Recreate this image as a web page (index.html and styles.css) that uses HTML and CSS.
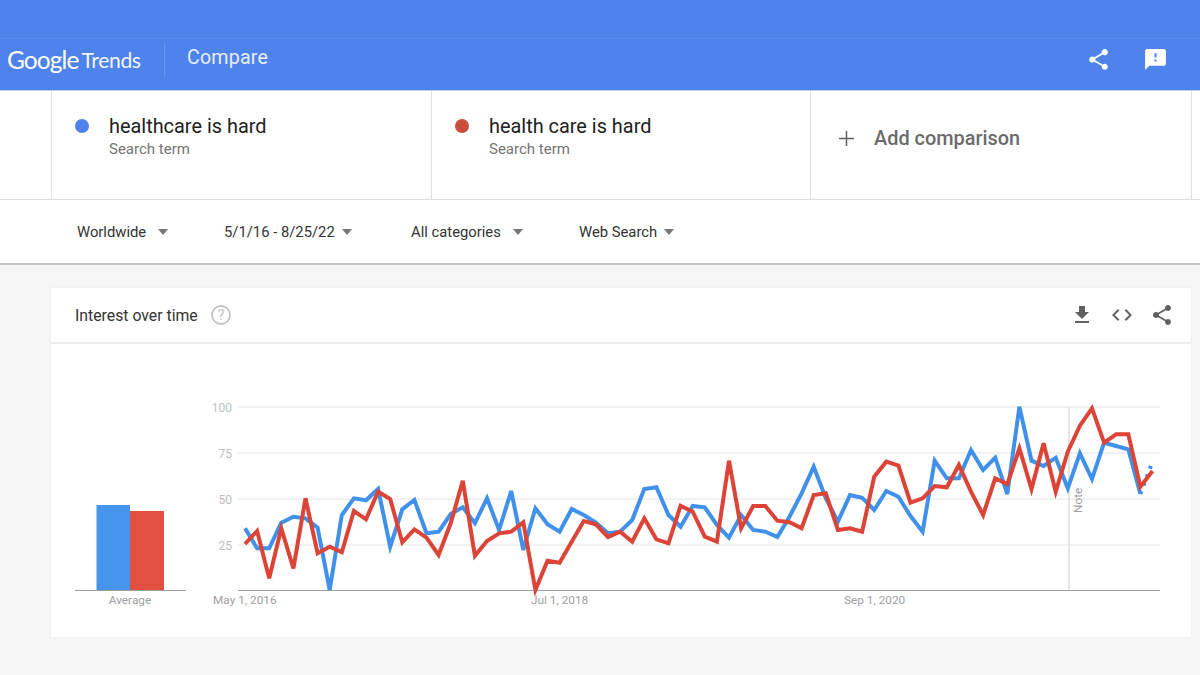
FILE: index.html
```html
<!DOCTYPE html>
<html lang="en">

<head>
    <meta charset="UTF-8">
    <title>Compare - Google Trends</title>
    <link rel="stylesheet" href="styles.css">
</head>

<body>
    <header class="topbar">
        <div class="topbar-strip"></div>
        <div class="topbar-main">
            <div class="logo"><span class="logo-google">Google</span><span class="logo-trends">Trends</span></div>
            <div class="page-title">Compare</div>
            <div class="topbar-icons">
                <svg class="icon-share" viewBox="0 0 24 24"><path d="M18 16.08c-.76 0-1.44.3-1.96.77L8.91 12.7c.05-.23.09-.46.09-.7s-.04-.47-.09-.7l7.05-4.11c.54.5 1.25.81 2.04.81 1.66 0 3-1.34 3-3s-1.34-3-3-3-3 1.34-3 3c0 .24.04.47.09.7L8.04 9.81C7.5 9.31 6.79 9 6 9c-1.66 0-3 1.34-3 3s1.34 3 3 3c.79 0 1.5-.31 2.04-.81l7.12 4.16c-.05.21-.08.43-.08.65 0 1.61 1.31 2.92 2.92 2.92 1.61 0 2.92-1.31 2.92-2.92s-1.31-2.92-2.92-2.92z"/></svg>
                <svg class="icon-feedback" viewBox="0 0 24 24"><path d="M20 2H4c-1.1 0-1.99.9-1.99 2L2 22l4-4h14c1.1 0 2-.9 2-2V4c0-1.1-.9-2-2-2zm-7 12h-2v-2h2v2zm0-4h-2V6h2v4z"/></svg>
            </div>
        </div>
    </header>

    <!-- Search terms -->
    <section class="terms">
        <div class="term">
            <span class="dot dot-blue"></span>
            <div>
                <div class="term-name">healthcare is hard</div>
                <div class="term-sub">Search term</div>
            </div>
        </div>
        <div class="term">
            <span class="dot dot-red"></span>
            <div>
                <div class="term-name">health care is hard</div>
                <div class="term-sub">Search term</div>
            </div>
        </div>
        <div class="term term-add">
            <svg class="icon-plus" viewBox="0 0 16 16"><path d="M7.2 0h1.6v7.2H16v1.6H8.8V16H7.2V8.8H0V7.2h7.2z"/></svg>
            <span>Add comparison</span>
        </div>
    </section>

    <!-- Filters -->
    <section class="filters">
        <div class="filter filter-geo">Worldwide<span class="caret"></span></div>
        <div class="filter filter-date">5/1/16 - 8/25/22<span class="caret"></span></div>
        <div class="filter filter-cat">All categories<span class="caret"></span></div>
        <div class="filter filter-type">Web Search<span class="caret"></span></div>
    </section>

    <main class="content">
        <div class="card">
            <div class="card-header">
                <span class="card-title">Interest over time</span>
                <svg class="icon-help" viewBox="0 0 20 20">
                    <circle cx="10" cy="10" r="9"/>
                    <text x="10" y="15.2">?</text>
                </svg>
                <div class="card-icons">
                    <svg viewBox="0 0 24 24"><path d="M19 9h-4V3H9v6H5l7 7 7-7zM5 18v2h14v-2H5z"/></svg>
                    <svg viewBox="0 0 24 24"><path d="M9.4 16.6L4.8 12l4.6-4.6L8 6l-6 6 6 6 1.4-1.4zm5.2 0l4.6-4.6-4.6-4.6L16 6l6 6-6 6-1.4-1.4z"/></svg>
                    <svg viewBox="0 0 24 24"><path d="M18 16.08c-.76 0-1.44.3-1.96.77L8.91 12.7c.05-.23.09-.46.09-.7s-.04-.47-.09-.7l7.05-4.11c.54.5 1.25.81 2.04.81 1.66 0 3-1.34 3-3s-1.34-3-3-3-3 1.34-3 3c0 .24.04.47.09.7L8.04 9.81C7.5 9.31 6.79 9 6 9c-1.66 0-3 1.34-3 3s1.34 3 3 3c.79 0 1.5-.31 2.04-.81l7.12 4.16c-.05.21-.08.43-.08.65 0 1.61 1.31 2.92 2.92 2.92 1.61 0 2.92-1.31 2.92-2.92s-1.31-2.92-2.92-2.92z"/></svg>
                </div>
            </div>
            <div class="card-body">
                <!-- Average bars -->
                <svg class="avg-chart" viewBox="51 344 149 293">
                    <rect class="bar-blue" x="96.5" y="505" width="33.5" height="85"/>
                    <rect class="bar-red" x="130" y="511" width="34" height="79"/>
                    <line class="axis" x1="75" y1="590.5" x2="186" y2="590.5"/>
                    <text class="x-label" x="130" y="604" text-anchor="middle">Average</text>
                </svg>

                <!-- Line chart, drawn in page coordinates -->
                <svg class="line-chart" viewBox="200 344 991 293">
                    <line class="grid" x1="238" y1="407" x2="1160" y2="407"/>
                    <line class="grid" x1="238" y1="453" x2="1160" y2="453"/>
                    <line class="grid" x1="238" y1="499" x2="1160" y2="499"/>
                    <line class="grid" x1="238" y1="545" x2="1160" y2="545"/>
                    <line class="axis" x1="238" y1="590.5" x2="1160" y2="590.5"/>
                    <line class="note-line" x1="1069" y1="407" x2="1069" y2="590"/>

                    <text class="y-label" x="232" y="411.5">100</text>
                    <text class="y-label" x="232" y="457.5">75</text>
                    <text class="y-label" x="232" y="503.5">50</text>
                    <text class="y-label" x="232" y="549.5">25</text>
                    <text class="x-label" x="213" y="604">May 1, 2016</text>
                    <text class="x-label" x="531" y="604">Jul 1, 2018</text>
                    <text class="x-label" x="844" y="604">Sep 1, 2020</text>
                    <text class="x-label" transform="translate(1082 513) rotate(-90)">Note</text>

                    <polyline class="series series-blue" points="245,528.3 257.1,548.3 269.2,548.3 281.3,522.7 293.4,516.7 305.5,518.3 317.6,527.7 329.7,590 341.8,515 353.9,498.3 366,500.3 378.1,489 390.2,546.7 402.3,509.3 414.4,500 426.5,533.3 438.6,531.7 450.7,514 462.8,507.3 474.9,523.3 487,498.3 499.1,530 511.2,491 523.3,550 535.4,508.3 547.5,524.3 559.6,531.7 571.7,509 583.8,515 595.9,522.7 608,533.3 620.1,531.7 632.2,520 644.3,489 656.4,487.3 668.5,515 680.6,526.7 692.7,506 704.8,507.3 716.9,525 729,537.7 741.1,515 753.2,530 765.3,531.7 777.4,537 789.5,516.7 801.6,493.3 813.7,466.7 825.8,498.3 837.9,521.7 850,495 862.1,497.7 874.2,510 886.3,491 898.4,496.7 910.5,516 922.6,531.7 934.7,460.7 946.8,478.3 958.9,478.3 971,450 983.1,470 995.2,457.7 1007.3,494 1019.4,406.7 1031.5,460.7 1043.6,466 1055.7,457.7 1067.8,488.3 1079.9,453.3 1092,479 1104.1,442.7 1116.2,446 1128.3,449.3 1140.4,494"/>
                    <polyline class="series series-blue series-partial" points="1140.4,494 1152.5,461.7"/>
                    <polyline class="series series-red" points="245,544 257.1,531 269.2,578.3 281.3,528.3 293.4,568.3 305.5,498.3 317.6,553.3 329.7,546.7 341.8,552.3 353.9,511 366,519.3 378.1,491.7 390.2,499 402.3,542.3 414.4,529.3 426.5,537.7 438.6,555 450.7,523.3 462.8,480.7 474.9,555.7 487,541 499.1,533.3 511.2,531.7 523.3,522.3 535.4,590 547.5,560.7 559.6,562.7 571.7,541.7 583.8,521 595.9,524.3 608,537 620.1,531.7 632.2,541.7 644.3,518.3 656.4,539.3 668.5,543.3 680.6,505.7 692.7,511.7 704.8,536.7 716.9,541.7 729,460.7 741.1,528.3 753.2,506 765.3,506 777.4,520.7 789.5,522.3 801.6,528.3 813.7,495 825.8,493.3 837.9,530 850,528.3 862.1,531.7 874.2,476.7 886.3,461.7 898.4,465.7 910.5,502.7 922.6,498.3 934.7,486 946.8,487.3 958.9,465 971,491.7 983.1,515 995.2,478.3 1007.3,484.3 1019.4,448.3 1031.5,489 1043.6,443.3 1055.7,491.7 1067.8,451.7 1079.9,425.7 1092,408.3 1104.1,442.7 1116.2,434.3 1128.3,434.3 1140.4,486.7 1152.5,471"/>
                </svg>
            </div>
        </div>
    </main>
</body>

</html>
```

FILE: styles.css
```css
/* Global styles */
* {
    padding: 0;
    margin: 0;
    box-sizing: border-box;
}

body {
    font-family: Roboto, "Liberation Sans", sans-serif;
    background-color: #f6f6f6;
    width: 1200px;
    height: 675px;
    overflow: hidden;
}

svg {
    display: block;
}

/* Top bar */
.topbar {
    background-color: #4f83ec;
    height: 91px;
    color: #fff;
    border-bottom: 1px solid #c3cfe6;
}

.topbar-strip {
    height: 38px;
}

.topbar-main {
    height: 52px;
    border-top: 1px solid #5a8bed;
    display: flex;
    align-items: center;
    padding-left: 7px;
    padding-bottom: 10px;
}

.logo {
    width: 158px;
    height: 34px;
    border-right: 1px solid #6c97ef;
    display: flex;
    align-items: center;
}

.logo-google {
    font-family: Lato, sans-serif;
    font-size: 24.5px;
    letter-spacing: -0.9px;
    margin-right: 3px;
}

.logo-trends {
    font-family: Lato, sans-serif;
    font-size: 21.2px;
    letter-spacing: -0.4px;
    opacity: 0.92;
}

.page-title {
    font-size: 19.6px;
    margin-left: 22px;
    color: #e8effd;
    letter-spacing: 0.2px;
    margin-top: -5px;
}

.topbar-icons {
    margin-left: auto;
    display: flex;
    align-items: center;
    gap: 32px;
    padding-right: 32px;
    fill: #fff;
}

.icon-share {
    width: 25px;
    height: 25px;
}

.icon-feedback {
    width: 25px;
    height: 25px;
}

/* Search terms */
.terms {
    background-color: #fff;
    height: 109px;
    padding-left: 51px;
    padding-right: 8px;
    display: grid;
    grid-template-columns: 380px 379px 382px;
    border-bottom: 1px solid #e0e0e0;
}

.term {
    border-left: 1px solid #e0e0e0;
    padding: 23px 0 0 23px;
    display: flex;
    align-items: flex-start;
    gap: 20px;
}

.term:last-child {
    border-right: 1px solid #e0e0e0;
}

.dot {
    width: 14px;
    height: 14px;
    border-radius: 50%;
    margin-top: 5px;
}

.dot-blue {
    background-color: #4f83ec;
}

.dot-red {
    background-color: #cb4b3d;
}

.term-name {
    font-size: 19.9px;
    line-height: 26px;
    color: #212121;
}

.term-sub {
    font-size: 15px;
    line-height: 18px;
    color: #757575;
}

.term-add {
    padding: 0 0 13px 28px;
    align-items: center;
    font-size: 19.9px;
    font-weight: 500;
    color: #6b6b6b;
}

.icon-plus {
    width: 15px;
    height: 15px;
    fill: #616161;
}

/* Filters */
.filters {
    background-color: #fff;
    height: 65px;
    padding-left: 77px;
    display: flex;
    align-items: center;
    border-bottom: 2px solid #c6c6c6;
    font-size: 14.8px;
    color: #333;
}

.filter {
    display: flex;
    align-items: center;
}

.filter-geo {
    width: 147px;
}

.filter-date {
    width: 187px;
}

.filter-cat {
    width: 168px;
}

.caret {
    width: 0;
    height: 0;
    margin-left: 12px;
    border-left: 5.5px solid transparent;
    border-right: 5.5px solid transparent;
    border-top: 6px solid #757575;
}

.filter-date .caret,
.filter-type .caret {
    margin-left: 7px;
}

/* Card */
.content {
    padding: 23px 9px 0 51px;
}

.card {
    background-color: #fff;
    height: 349px;
    box-shadow: 0 0 2px rgba(0, 0, 0, 0.06);
}

.card-header {
    height: 56px;
    border-bottom: 2px solid #ececec;
    display: flex;
    align-items: center;
    padding-left: 24px;
}

.card-title {
    font-size: 15.8px;
    color: #333;
}

.icon-help {
    width: 20px;
    height: 20px;
    margin-left: 13px;
}

.icon-help circle {
    fill: none;
    stroke: #c4c4c4;
    stroke-width: 1.8;
}

.icon-help text {
    font-size: 15px;
    fill: #c4c4c4;
    text-anchor: middle;
}

.card-icons {
    margin-left: auto;
    display: flex;
    gap: 16px;
    padding-right: 17px;
    fill: #616161;
}

.card-icons svg {
    width: 24px;
    height: 24px;
}

.card-body {
    display: flex;
    height: 293px;
}

.avg-chart {
    width: 149px;
    height: 293px;
}

.line-chart {
    width: 991px;
    height: 293px;
}

.bar-blue {
    fill: #4695ec;
}

.bar-red {
    fill: #e2503f;
}

.axis {
    stroke: #a0a0a0;
    stroke-width: 1;
}

.grid {
    stroke: #e4e4e4;
    stroke-width: 1;
}

.note-line {
    stroke: #dcdcdc;
    stroke-width: 1.5;
}

.x-label {
    font-size: 11.8px;
    fill: #9e9e9e;
}

.y-label {
    font-size: 12px;
    fill: #bdbdbd;
    text-anchor: end;
}

.series {
    fill: none;
    stroke-width: 4;
    stroke-linejoin: miter;
}

.series-blue {
    stroke: #4191ea;
}

.series-partial {
    stroke-dasharray: 3 6;
}

.series-red {
    stroke: #db4437;
}
```
